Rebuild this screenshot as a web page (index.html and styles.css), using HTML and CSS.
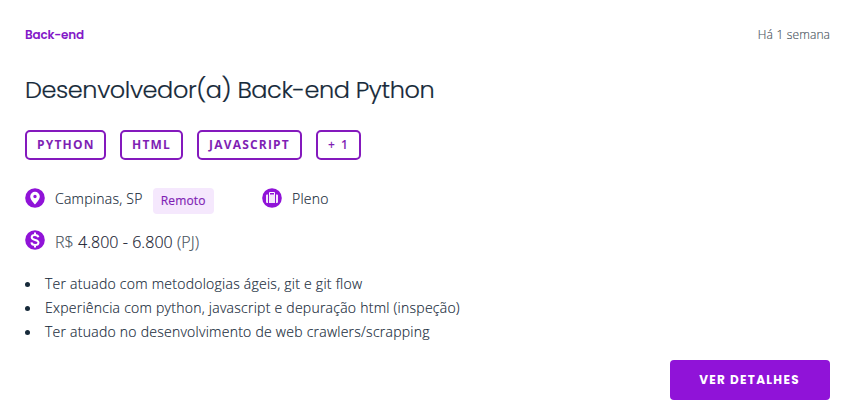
FILE: index.html
```html
<!DOCTYPE html>
<html lang="pt-BR">
<head>
<meta charset="utf-8">
<title>Desenvolvedor(a) Back-end Python</title>
<link rel="stylesheet" href="styles.css">
</head>
<body>
<article class="card">
  <header class="top"><span class="area">Back-end</span><time class="date">Há 1 semana</time></header>
  <h2 class="title">Desenvolvedor(a) Back-end Python</h2>
  <div class="tags"><span class="tag python">PYTHON</span><span class="tag html">HTML</span><span class="tag js">JAVASCRIPT</span><span class="tag more">+ 1</span></div>
  <div class="facts">
    <div class="fact place">
      <svg class="icon" viewBox="0 0 20 20"><circle cx="10" cy="10" r="9.8" fill="#9013d8"/><path fill="#fff" fill-rule="evenodd" d="M10 3.800a4.800 4.800 0 0 0-4.800 4.800c0 3.300 4.800 7.900 4.800 7.900s4.800-4.600 4.800-7.900A4.800 4.800 0 0 0 10 3.800zm0 3a1.700 1.700 0 1 1 0 3.400 1.700 1.700 0 0 1 0-3.400z"/></svg>
      <span class="label">Campinas, SP</span><span class="remote">Remoto</span>
    </div>
    <div class="fact">
      <svg class="icon" viewBox="0 0 20 20"><circle cx="10" cy="10" r="9.8" fill="#9013d8"/><path fill="#fff" fill-opacity=".9" d="M4 7.500q0-1 1-1h1v8.500H5q-1 0-1-1zM14 6.500h1q1 0 1 1V14q0 1-1 1h-1zM7 6.500h6V15H7z"/><path fill="none" stroke="#fff" d="M7.500 7V4.500h5V7"/></svg>
      <span class="label">Pleno</span>
    </div>
  </div>
  <div class="salary">
    <svg class="icon" viewBox="0 0 20 20"><circle cx="10" cy="10" r="9.8" fill="#9013d8"/><path fill="none" stroke="#fff" stroke-width="2" d="M13.400 7.300C13.100 5.700 11.800 4.900 10 4.900c-2 0-3.300 1-3.300 2.400 0 3.500 6.800 1.800 6.800 5.200 0 1.600-1.400 2.600-3.400 2.600-2.100 0-3.500-1-3.700-2.700M10 2.500v2.800M10 14.500v3"/></svg>
    <span class="pay">R$ <b>4.800 - 6.800</b> (PJ)</span>
  </div>
  <ul class="list">
    <li>Ter atuado com metodologias ágeis, git e git flow</li>
    <li>Experiência com python, javascript e depuração html (inspeção)</li>
    <li>Ter atuado no desenvolvimento de web crawlers/scrapping</li>
  </ul>
  <a class="button">VER DETALHES</a>
</article>
</body>
</html>
```
FILE: styles.css
```css
* { box-sizing: border-box; }
body { margin: 0; background: #fff; color: #172a3a; font-family: "Open Sans", sans-serif; }
.card { display: flex; flex-direction: column; width: 862px; height: 414px; padding: 24px 32px 14px 25px; }
.top { display: flex; justify-content: space-between; height: 20px; line-height: 20px; }
.area { color: #8419c8; font: 600 12px/22px Poppins, Inter, sans-serif; letter-spacing: -.2px; }
.date { color: #4a5560; font-size: 12px; font-weight: 300; line-height: 21px; letter-spacing: .15px; -webkit-text-stroke: .15px; margin-right: -.15px; }
.title { margin: 28px 0 0; font: 300 24px/36px Poppins, Inter, sans-serif; letter-spacing: -.42px; -webkit-text-stroke: .2px; white-space: nowrap; }
.tags { display: flex; gap: 14px; margin-top: 22px; }
.tag { height: 30px; border: 2px solid #8419bd; border-radius: 5px; padding-left: 10px; color: #7f1fb4; font-size: 12px; font-weight: 700; line-height: 26px; letter-spacing: 1.2px; white-space: nowrap; }
.python { width: 81px; }
.html { width: 63px; }
.js { width: 105px; }
.more { width: 45px; font-weight: 600; letter-spacing: 1.5px; }
.facts { display: flex; height: 26px; margin-top: 28px; }
.fact { display: flex; align-items: flex-start; }
.place { width: 237px; }
.icon { width: 20px; height: 20px; margin-right: 10px; flex: none; }
.label { font-size: 14px; font-weight: 300; line-height: 22px; letter-spacing: .25px; -webkit-text-stroke: .15px; white-space: nowrap; }
.remote { width: 61px; height: 26px; margin-left: 10px; border-radius: 4px; background: #f5e8fd; color: #7f1fb4; font-size: 12px; line-height: 26px; letter-spacing: .15px; text-align: center; -webkit-text-stroke: .15px; }
.salary { display: flex; height: 24px; margin-top: 16px; }
.pay { color: #45505a; font-size: 16px; font-weight: 300; line-height: 25px; letter-spacing: .05px; -webkit-text-stroke: .15px; }
.pay b { color: #172030; font-weight: 300; }
.list { margin: 18px 0 0; padding: 0; list-style: none; font-size: 14px; font-weight: 300; line-height: 24px; letter-spacing: .25px; -webkit-text-stroke: .15px; }
.list li { display: flex; align-items: center; }
.list li::before { content: ""; width: 5px; height: 5px; margin-right: 15px; border-radius: 50%; background: #172a3a; }
.button { align-self: flex-end; width: 160px; height: 40px; margin-top: 16px; border-radius: 4px; background: #9013d8; color: #fff; font: 700 12px/40px Poppins, Inter, sans-serif; letter-spacing: 1.3px; padding-right: 1px; text-align: center; }
```
